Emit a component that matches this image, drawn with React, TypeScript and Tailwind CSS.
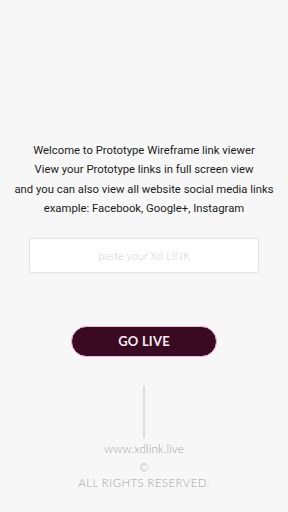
export default function App() {
  return (
    <div className="flex h-[512px] w-[288px] flex-col items-center bg-[#f7f7f7] font-['Roboto',sans-serif]">
      {/* Intro */}
      <div className="mt-[141px] text-center text-[11.3px] leading-[19.3px] text-[#1c1c1c]">
        <p>Welcome to Prototype Wireframe link viewer</p>
        <p>View your Prototype links in full screen view</p>
        <p>and you can also view all website social media links</p>
        <p>example: Facebook, Google+, Instagram</p>
      </div>

      {/* Link input */}
      <input
        type="text"
        placeholder="paste your Xd LINK"
        className="mt-[20px] h-[35px] w-[230px] rounded-[3px] border border-[#e3e3e3] bg-white text-center font-['Lato',sans-serif] text-[11px] font-light shadow-[0_0_2px_rgba(0,0,0,0.06)] outline-none placeholder:text-[#cfcfcf]"
      />

      <button className="mt-[53px] h-[31px] w-[146px] rounded-full border border-[#f3b9d6] bg-[#3a0a22] font-['Lato',sans-serif] text-[13px] font-bold tracking-[0.2px] text-[#f4eef1]">
        GO LIVE
      </button>

      {/* Footer */}
      <div className="mt-[29px] h-[52px] w-[2px] bg-[#dedede]" />
      <div className="mt-[3px] flex flex-col items-center font-['Lato',sans-serif] text-[#a3a3a3]">
        <span className="text-[12px] font-light leading-[16px]">www.xdlink.live</span>
        <span className="mt-[4px] text-[11px] font-light leading-[14px]">©</span>
        <span className="mt-[1px] text-[11.3px] font-light leading-[14px] tracking-[0.5px]">ALL RIGHTS RESERVED.</span>
      </div>
    </div>
  )
}
